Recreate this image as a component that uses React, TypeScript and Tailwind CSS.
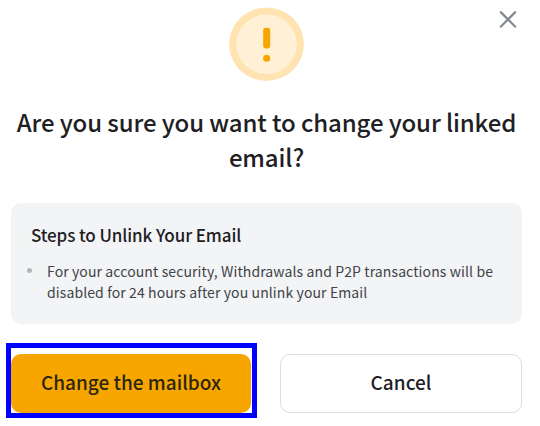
function WarningIcon() {
  return (
    <svg width="76" height="74" viewBox="0 0 76 74" fill="none" aria-hidden="true">
      <ellipse cx="37.5" cy="37.2" rx="37.4" ry="36.7" fill="#ffe4b2" />
      <ellipse cx="37.5" cy="37.2" rx="30.3" ry="29.8" fill="#fff0d6" />
      <rect x="34.2" y="20.7" width="7" height="20.8" rx="2.4" fill="#f7a600" />
      <ellipse cx="37.7" cy="51.2" rx="3.6" ry="3.5" fill="#f7a600" />
    </svg>
  )
}

function CloseIcon() {
  return (
    <svg width="18" height="18" viewBox="0 0 18 18" fill="none" stroke="#858a91" strokeWidth="2.2" aria-hidden="true">
      <path d="M1.2 1.6 16.8 17.2M16.8 1.6 1.2 17.2" />
    </svg>
  )
}

export default function App() {
  return (
    <main className="relative h-[426px] w-[540px] overflow-hidden bg-white pt-[7px] font-['Noto_Sans_CJK_SC','Noto_Sans',sans-serif] text-[#1e2023]">
      <button className="absolute top-[10px] right-[23px]" aria-label="Close">
        <CloseIcon />
      </button>

      <div className="flex justify-center pr-[7px]">
        <WarningIcon />
      </div>

      <h1 className="mt-[23px] w-[533px] text-center text-[24px] leading-[35px] font-medium tracking-[-0.11px]">
        Are you sure you want to change your linked
        <br />
        email?
      </h1>

      <section className="mt-[29px] ml-[11px] h-[121px] w-[511px] rounded-[10px] bg-[#f3f4f6] pt-[20px] pl-[20px]">
        <h2 className="text-[17px] leading-[24px] font-medium tracking-[-0.1px]">Steps to Unlink Your Email</h2>
        <ul className="mt-[13px]">
          <li className="flex text-[14px] leading-[21px] tracking-[0.11px] text-[#404347]">
            <span className="mt-[8px] mr-[15px] -ml-[4px] size-[5px] rounded-full bg-[#b2b6bc]" />
            <span className="pt-px whitespace-nowrap">
              For your account security, Withdrawals and P2P transactions will be
              <br />
              disabled for 24 hours after you unlink your Email
            </span>
          </li>
        </ul>
      </section>

      <div className="mt-[19px] flex pl-[6px] text-[19px] leading-[28px] font-medium">
        <div className="h-[75px] w-[251px] border-[5px] border-[#0000ff] pt-[6px]">
          <button className="h-[59px] w-[240px] rounded-[10px] bg-[#f7a600] pb-[4px] text-[#2c250f]">
            Change the mailbox
          </button>
        </div>
        <button className="mt-[11px] ml-[23px] h-[59px] w-[242px] rounded-[10px] border border-[#dcdddf] bg-white pb-[4px]">
          Cancel
        </button>
      </div>
    </main>
  )
}
